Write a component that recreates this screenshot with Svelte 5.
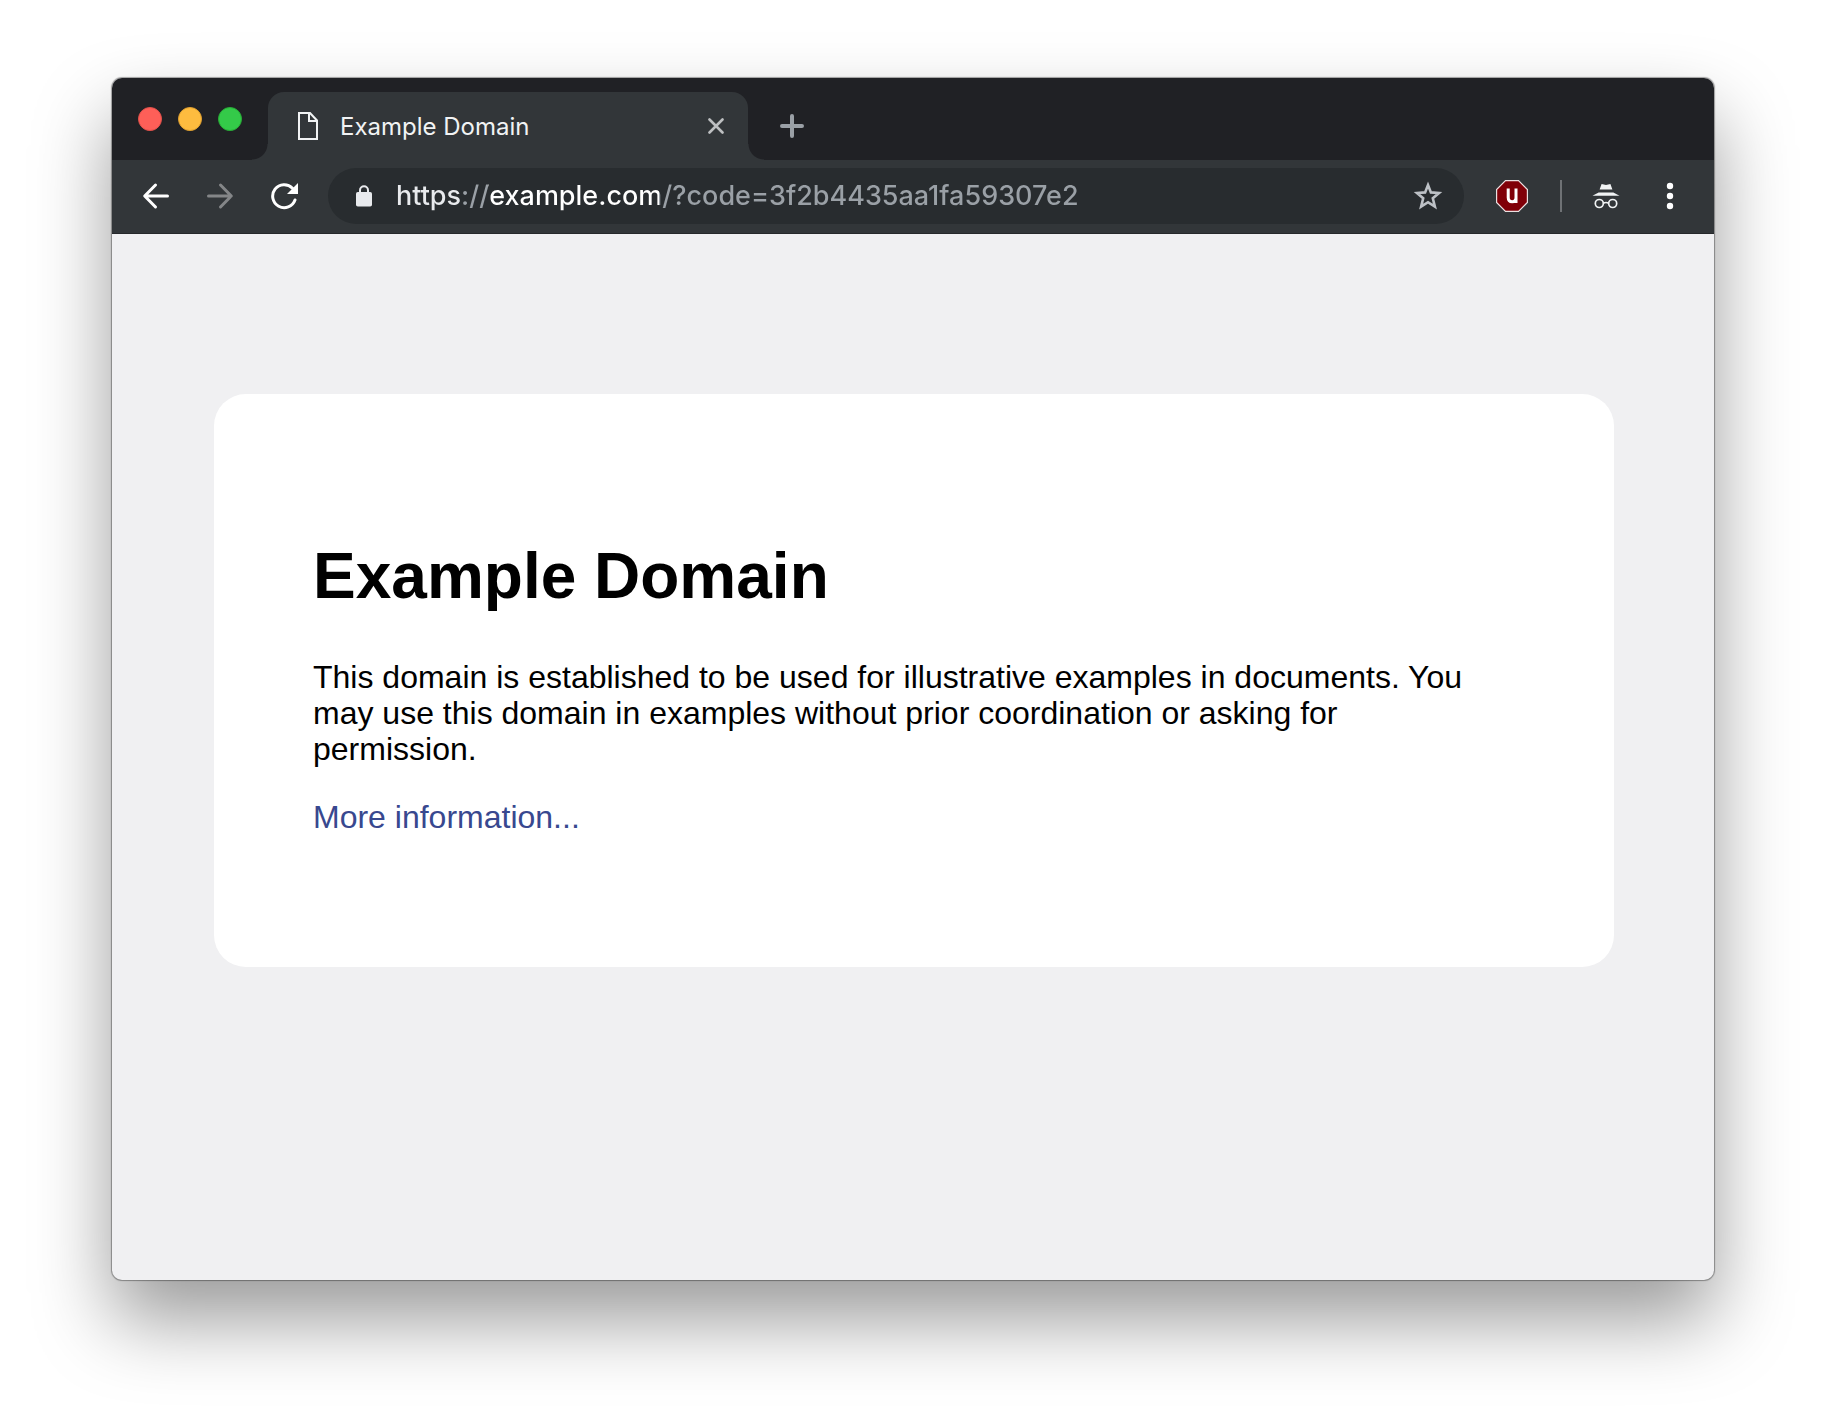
<script>
  let url = $state('https://example.com/?code=3f2b4435aa1fa59307e2');
</script>

<div class="desktop">
  <div class="window">
    <header class="tabstrip">
      <div class="lights">
        <button class="light close" aria-label="Close window"></button>
        <button class="light minimize" aria-label="Minimize window"></button>
        <button class="light maximize" aria-label="Maximize window"></button>
      </div>
      <div class="tab">
        <svg width="20" height="28" viewBox="0 0 20 28" fill="none" stroke="#f1f3f4" stroke-width="2" aria-hidden="true">
          <path d="M1 1H12L19 8.5V27H1Z" />
          <path d="M11 1V9H19" />
        </svg>
        <span class="title">Example Domain</span>
        <button class="icon" aria-label="Close tab">
          <svg width="16" height="16" viewBox="0 0 16 16" stroke="#bdbfc1" stroke-width="2.6" stroke-linecap="round">
            <path d="M1.5 1.5L14.5 14.5M14.5 1.5L1.5 14.5" />
          </svg>
        </button>
      </div>
      <button class="icon newtab" aria-label="New tab">
        <svg width="24" height="24" viewBox="0 0 24 24" stroke="#9aa0a6" stroke-width="4" stroke-linecap="round">
          <path d="M2 12H22M12 2V22" />
        </svg>
      </button>
    </header>

    <nav class="toolbar">
      <button class="tool" aria-label="Back">
        <svg width="28" height="28" viewBox="0 0 28 28" fill="none" stroke="#fff" stroke-width="3" stroke-linecap="round" stroke-linejoin="round">
          <path d="M25.5 14H3M13.5 3L2.7 14L13.5 25" />
        </svg>
      </button>
      <button class="tool" aria-label="Forward">
        <svg width="28" height="28" viewBox="0 0 28 28" fill="none" stroke="#848688" stroke-width="3" stroke-linecap="round" stroke-linejoin="round">
          <path d="M2.5 14H25M14.5 3L25.3 14L14.5 25" />
        </svg>
      </button>
      <button class="tool" aria-label="Reload">
        <svg width="28" height="28" viewBox="0 0 28 28" fill="none">
          <path d="M22.5 6.2A11.5 11.5 0 1 0 25 18" stroke="#fff" stroke-width="3" stroke-linecap="round" />
          <path d="M28 1V12H17Z" fill="#fff" />
        </svg>
      </button>

      <div class="omnibox">
        <svg width="16" height="22" viewBox="0 0 16 22" fill="none" aria-hidden="true">
          <rect y="7" width="16" height="14.5" rx="1.8" fill="#e8eaed" />
          <path d="M4 8V5.2a4 4 0 0 1 8 0V8" stroke="#e8eaed" stroke-width="2" />
        </svg>
        <input class="url" type="text" aria-label="Address" spellcheck="false" bind:value={url} />
        <button class="icon" aria-label="Bookmark this page">
          <svg width="30" height="30" viewBox="0 0 30 30" fill="none" stroke="#bdc1c6" stroke-width="2.6">
            <path d="M15 4L17.9 11.4L26 12L19.8 17.2L21.9 25.6L15 21.2L8.1 25.6L10.2 17.2L4 12L12.1 11.4Z" />
          </svg>
        </button>
      </div>

      <button class="tool" aria-label="uBlock Origin">
        <svg width="32" height="32" viewBox="0 0 32 32" fill="none">
          <path d="M9.5 .6H22.5L31.4 9.5V22.5L22.5 31.4H9.5L.6 22.5V9.5Z" fill="#800008" stroke="#eadfe0" stroke-width="1.2" />
          <path d="M12.2 8.5V17.5Q12.2 21.8 16.2 21.8Q20 21.8 20 17.5V8.5M20 16V23" stroke="#fff" stroke-width="3" />
        </svg>
      </button>
      <span class="divider"></span>
      <button class="tool" aria-label="Incognito">
        <svg width="28" height="28" viewBox="0 0 28 28" fill="none">
          <path d="M9.6 2L14 3L18.4 2L20.4 7.6H7.6Z" fill="#f1f3f4" />
          <path d="M.5 13.7L6.6 10.5H21.4L27.5 13.7Z" fill="#f1f3f4" />
          <circle cx="7.3" cy="21.5" r="4" stroke="#f1f3f4" stroke-width="1.7" />
          <circle cx="20.7" cy="21.5" r="4" stroke="#f1f3f4" stroke-width="1.7" />
          <path d="M11.3 21.2Q14 19.8 16.7 21.2" stroke="#f1f3f4" stroke-width="1.7" />
        </svg>
      </button>
      <button class="tool" aria-label="Menu">
        <svg width="8" height="28" viewBox="0 0 8 28" fill="#fff">
          <circle cx="4" cy="4" r="3.2" />
          <circle cx="4" cy="14" r="3.2" />
          <circle cx="4" cy="24" r="3.2" />
        </svg>
      </button>
    </nav>

    <main>
      <article>
        <h1>Example Domain</h1>
        <p>This domain is established to be used for illustrative examples in documents. You may use this domain in examples without prior coordination or asking for permission.</p>
        <p><a href="#more">More information...</a></p>
      </article>
    </main>
  </div>
</div>

<style>
  :global(body) {
    background: #fff;
  }
  .desktop {
    box-sizing: border-box;
    min-height: 100vh;
    padding: 78px 112px 148px;
    display: flex;
    overflow: hidden;
    font-family: Inter, 'Liberation Sans', sans-serif;
  }
  .window {
    flex: 1;
    min-width: 0;
    display: flex;
    flex-direction: column;
    border-radius: 10px;
    overflow: hidden;
    background: #f0f0f2;
    box-shadow: 0 0 1px 1px rgba(0, 0, 0, 0.35), 0 40px 78px rgba(0, 0, 0, 0.4);
  }
  button {
    padding: 0;
    border: 0;
    background: none;
    display: flex;
    align-items: center;
    justify-content: center;
  }
  .tabstrip {
    display: flex;
    align-items: center;
    height: 82px;
    padding-left: 26px;
    background: #202125;
  }
  .lights {
    display: flex;
    gap: 16px;
    margin-right: 26px;
  }
  .light {
    width: 24px;
    height: 24px;
    border-radius: 50%;
  }
  .close {
    background: #fe5f58;
    border: 1px solid #e2504a;
  }
  .minimize {
    background: #febc3f;
    border: 1px solid #e0a02f;
  }
  .maximize {
    background: #34ca49;
    border: 1px solid #27ad36;
  }
  .tab {
    position: relative;
    box-sizing: border-box;
    align-self: flex-end;
    width: 480px;
    height: 68px;
    padding: 0 24px 0 30px;
    display: flex;
    align-items: center;
    border-radius: 16px 16px 0 0;
    background: #323639;
  }
  .tab::before,
  .tab::after {
    content: '';
    position: absolute;
    bottom: 0;
    width: 16px;
    height: 16px;
  }
  .tab::before {
    right: 100%;
    background: radial-gradient(circle at 0 0, transparent 15px, #323639 16px);
  }
  .tab::after {
    left: 100%;
    background: radial-gradient(circle at 100% 0, transparent 15px, #323639 16px);
  }
  .title {
    flex: 1;
    margin-left: 22px;
    font-size: 24px;
    color: #f1f3f4;
  }
  .newtab {
    align-self: flex-end;
    height: 68px;
    margin-left: 32px;
  }
  .toolbar {
    box-sizing: border-box;
    height: 74px;
    padding: 0 12px 2px;
    display: flex;
    align-items: center;
    background: #323639;
    border-bottom: 1px solid #26282b;
  }
  .tool {
    width: 64px;
    height: 56px;
  }
  .omnibox {
    flex: 1;
    min-width: 0;
    box-sizing: border-box;
    height: 56px;
    margin: 0 16px 0 12px;
    padding: 0 21px 0 28px;
    display: flex;
    align-items: center;
    border-radius: 28px;
    background: #282c2f;
  }
  .url {
    flex: 1;
    min-width: 0;
    height: 40px;
    margin-left: 24px;
    padding: 0;
    border: 0;
    outline: 0;
    font: 500 27px Inter, 'Liberation Sans', sans-serif;
    color: transparent;
    caret-color: #fff;
    background: linear-gradient(90deg, #e8eaed 66px, #9aa0a6 66px 92px, #fff 92px 263px, #9aa0a6 263px);
    background-clip: text;
    -webkit-background-clip: text;
  }
  .divider {
    width: 2px;
    height: 32px;
    margin: 0 12px 0 16px;
    background: #6f7275;
  }
  main {
    flex: 1;
    padding: 160px 100px 0 102px;
    font-family: 'Liberation Sans', sans-serif;
  }
  article {
    box-sizing: border-box;
    max-width: 1400px;
    margin: 0 auto;
    padding: 143px 120px 132px 99px;
    border-radius: 32px;
    background: #fff;
  }
  h1 {
    margin: 0 0 44px;
    font-size: 64px;
    line-height: 78px;
    color: #000;
  }
  p {
    margin: 0;
    font-size: 32px;
    line-height: 36px;
    color: #000;
  }
  p + p {
    margin-top: 32px;
  }
  a {
    color: #38488f;
    text-decoration: none;
  }
</style>
